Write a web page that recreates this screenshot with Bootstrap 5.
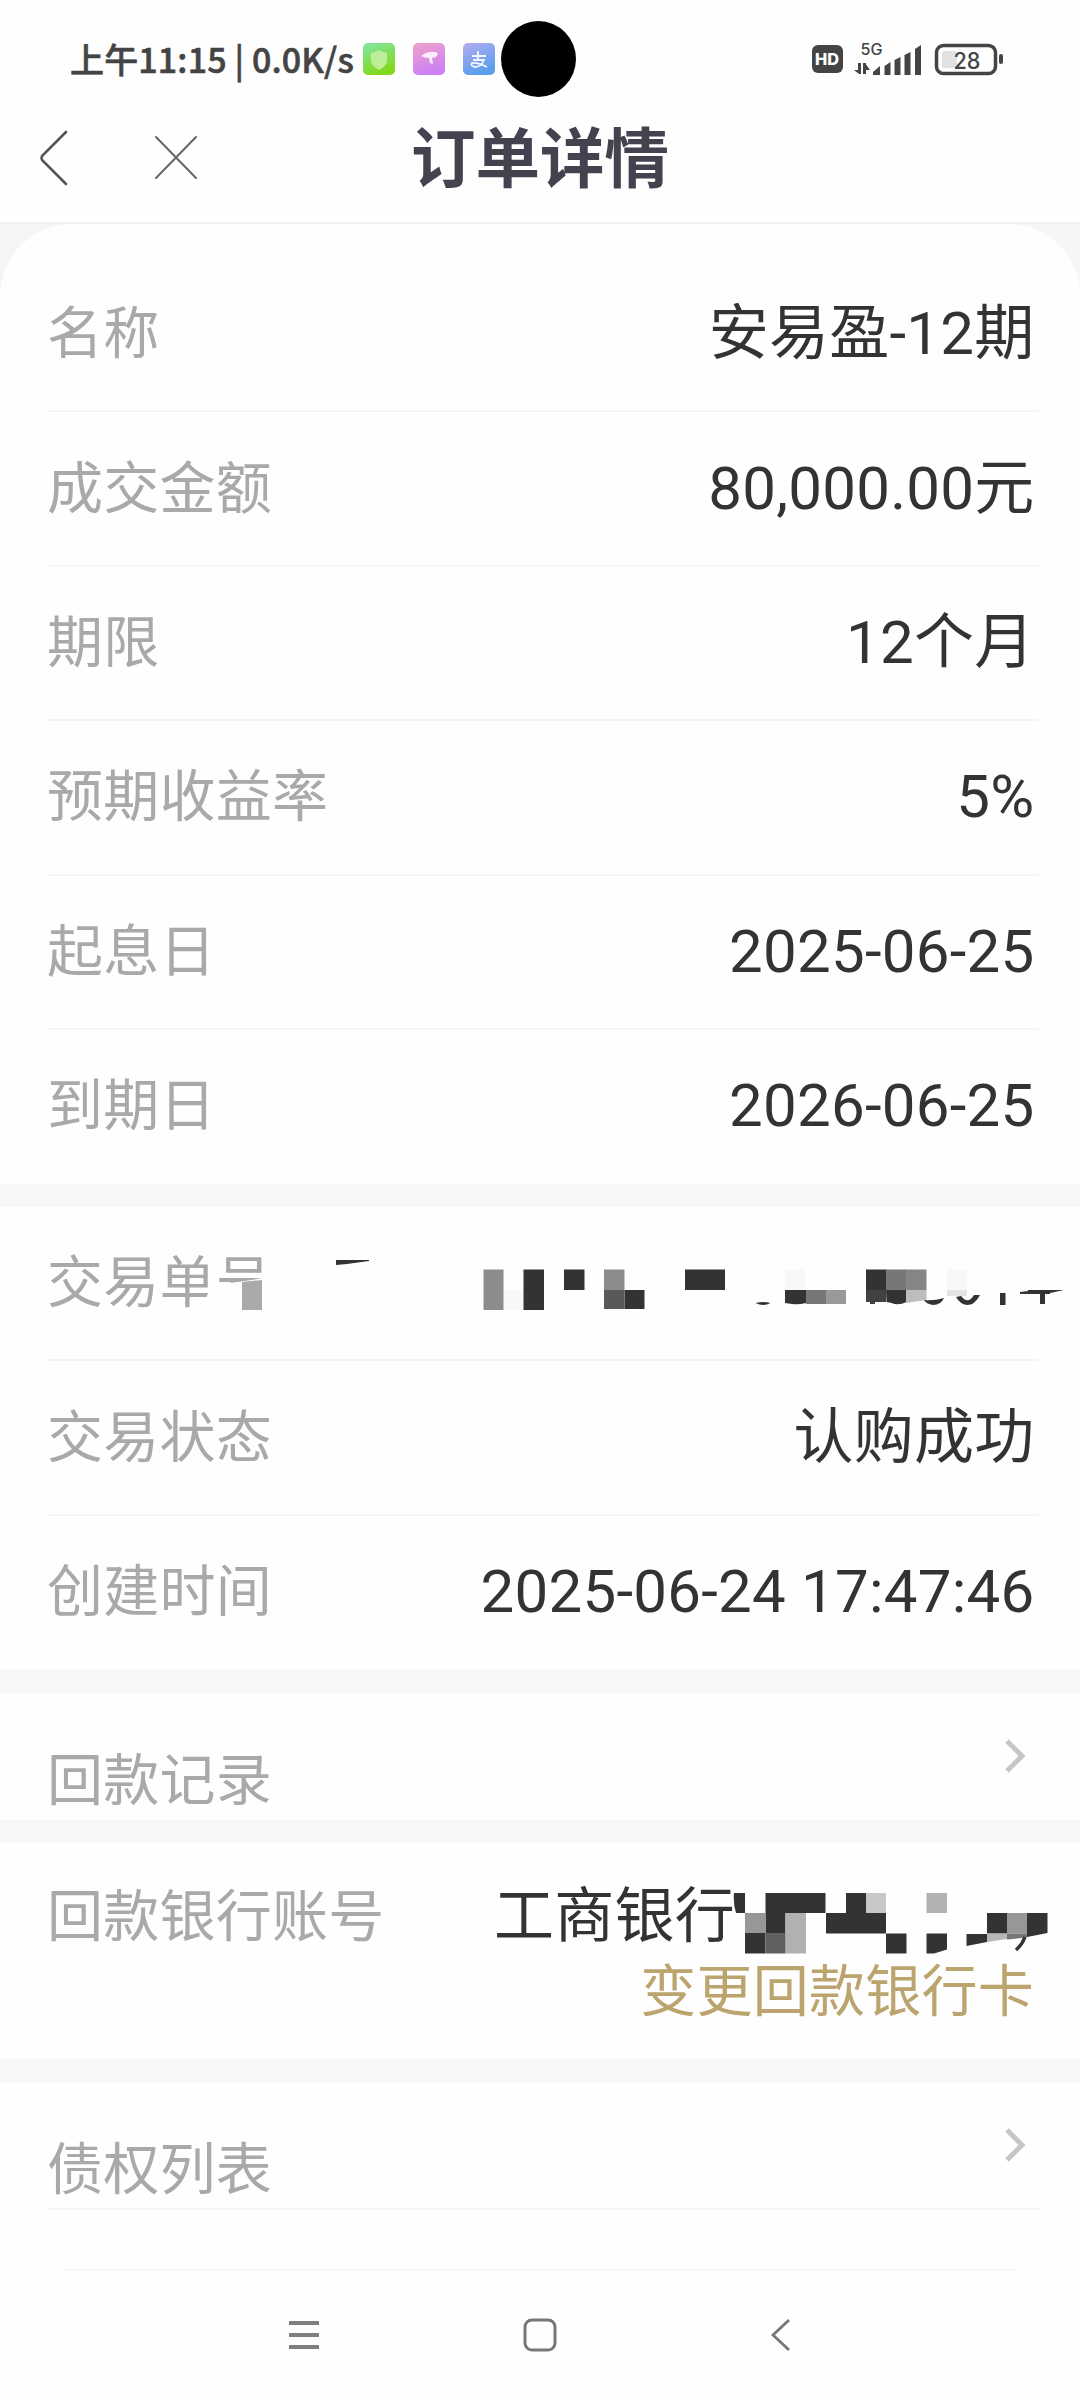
<!DOCTYPE html>
<html lang="zh-CN">
<head>
<meta charset="utf-8">
<meta name="viewport" content="width=device-width, initial-scale=1">
<title>订单详情</title>
<link href="https://cdn.jsdelivr.net/npm/bootstrap@5.3.0/dist/css/bootstrap.min.css" rel="stylesheet">
<style>
body{width:1080px;height:2400px;overflow:hidden;background:#fefefe;font-family:Roboto,"Noto Sans CJK SC",sans-serif;color:#333}
svg{display:block;overflow:visible;flex:none}
.statusbar{height:118px;color:#444;padding-left:70px;padding-right:76px}
.clock{font:500 34px/40px "Noto Sans CJK SC",sans-serif;letter-spacing:.15px;-webkit-text-stroke:.6px #444;width:293px;white-space:nowrap}
.camera{left:501px;top:21px}
.titlebar{height:104px;padding:0 40px 25px}
.page-title{font:700 64.5px/80px "Noto Sans CJK SC",sans-serif;color:#45424f;padding-bottom:8px}
.nav-side{width:160px}
.sheet{background:linear-gradient(135deg,#f5f5f5,#f8f8f8);border-top:2px solid #f2f2f2}
.sheet-top{padding-top:34px;border-radius:72px 72px 0 0}
.section-block{padding-left:47px;padding-right:41px;background:#fefefe}
.info-row{height:154.4px;border-bottom:2px solid #f5f5f5;padding-right:4.5px}
.info-row:last-of-type{border-bottom-color:transparent}
.info-label{font-size:56px;line-height:80px;letter-spacing:.25px;color:#a9a9a9;white-space:nowrap}
.info-value{font-size:60px;line-height:80px;letter-spacing:.25px;white-space:nowrap}
.gap-band{height:22.6px;background:#f7f7f7}
.row-link{height:127px;padding-top:23px}
.row-link .info-label{padding-top:25.5px}
.row-link svg{margin:23px 13px 0 0}
.bank{height:217px;padding-top:35px;padding-right:46px}
.bank-name{margin-right:299px}
.change-link{display:block;font-size:56px;line-height:80px;letter-spacing:.25px;color:#bba46d;margin-top:-5px}
.redact{left:0;top:0;width:1080px;height:1px;pointer-events:none}
.bonds{height:128.5px;border-bottom:2px solid #f3f3f3;margin-left:47px;margin-right:41px}
.end-line{height:61px;margin:0 65px;border-bottom:2px solid #f6f6f6}
.sysnav{height:128px;padding:0 289px}
.home-key{margin-right:10px}
</style>
<script src="https://cdn.jsdelivr.net/npm/bootstrap@5.3.0/dist/js/bootstrap.bundle.min.js"></script>
</head>
<body>
<header>
  <div class="statusbar d-flex align-items-center position-relative">
    <div class="clock">上午11:15 | 0.0K/s</div>
    <svg width="132" height="32" viewBox="0 0 132 32">
      <defs>
        <linearGradient id="g1" x2=".4" y2="1"><stop stop-color="#82e6a8"/><stop offset="1" stop-color="#82d91c"/></linearGradient>
        <linearGradient id="g2" x2=".3" y2="1"><stop stop-color="#efa3ca"/><stop offset="1" stop-color="#cd80f3"/></linearGradient>
        <linearGradient id="g3" x2=".4" y2="1"><stop stop-color="#b5acf2"/><stop offset="1" stop-color="#5b9eea"/></linearGradient>
      </defs>
      <rect width="32" height="32" rx="5" fill="url(#g1)"/>
      <path d="M16 7q4 3 8 3v8q-1 6-8 9q-7-3-8-9v-8q4 0 8-3z" fill="#c5f0a0" opacity=".9"/>
      <rect x="50" width="32" height="32" rx="5" fill="url(#g2)"/>
      <path d="M58 13q5-4 10-4 5-1 7 2l-2 3-4 1 1 6-3-1-1-5q-5 0-8-2z" fill="#fdeafa"/>
      <rect x="100" width="32" height="32" rx="5" fill="url(#g3)"/>
      <path d="M109 13h14M115 8v9M110 17h11q-3 7-9 7-5-1-3-4 5-1 15 4" fill="none" stroke="#f3f5ff" stroke-width="1.800"/>
    </svg>
    <svg class="camera position-absolute" width="75" height="76" viewBox="0 0 75 76"><ellipse cx="37.5" cy="38" rx="37.5" ry="38"/></svg>
    <svg class="ms-auto" width="192" height="32" viewBox="812 43 192 32" fill="#444">
      <rect x="812" y="45" width="31" height="28" rx="6"/>
      <text x="815" y="65" font-family="Inter" font-weight="800" font-size="16" textLength="24" lengthAdjust="spacingAndGlyphs" fill="#fff">HD</text>
      <text x="860.5" y="54.5" font-family="Inter" font-weight="500" font-size="15.5" textLength="22" lengthAdjust="spacingAndGlyphs">5G</text>
      <path d="M854 70h4v-7h3v11h-2zM863 63h3v11h-3zM863 63h2l5 7h-4z"/>
      <path d="M873 75v-3l7-6v9zM884.500 75v-9l6-4v13zM894.500 75v-15l6-3v18zM904.500 75v-20l6-3v23zM915 75v-26l6-4v30z"/>
      <rect x="936.500" y="45.500" width="59" height="28" rx="7" fill="none" stroke="#444" stroke-width="3.500"/>
      <rect x="942" y="51" width="15" height="17" rx="2" fill="#e2e2e2"/>
      <rect x="999" y="54" width="4" height="10" rx="2"/>
      <text x="953.500" y="68.500" font-family="Inter" font-weight="500" font-size="22.500" textLength="27" lengthAdjust="spacingAndGlyphs">28</text>
    </svg>
  </div>
  <div class="titlebar d-flex align-items-center justify-content-between">
    <div class="nav-side d-flex align-items-center">
      <svg width="28" height="54" viewBox="0 0 28 54" fill="none" stroke="#555" stroke-width="2.600" stroke-linecap="round"><path d="M26 1L2 25q-1 2 0 4L26 53" /></svg>
      <svg class="ms-auto" width="45" height="43" viewBox="0 0 45 43" stroke="#666" stroke-width="2" stroke-linecap="round"><path d="M1 1l40 41M41 1L1 42"/></svg>
    </div>
    <h1 class="page-title m-0">订单详情</h1>
    <div class="nav-side"></div>
  </div>
</header>
<main>
  <div class="sheet">
    <section class="sheet-top section-block">
      <div class="info-row d-flex align-items-center justify-content-between"><span class="info-label">名称</span><span class="info-value">安易盈-12期</span></div>
      <div class="info-row d-flex align-items-center justify-content-between"><span class="info-label">成交金额</span><span class="info-value">80,000.00元</span></div>
      <div class="info-row d-flex align-items-center justify-content-between"><span class="info-label">期限</span><span class="info-value">12个月</span></div>
      <div class="info-row d-flex align-items-center justify-content-between"><span class="info-label">预期收益率</span><span class="info-value">5%</span></div>
      <div class="info-row d-flex align-items-center justify-content-between"><span class="info-label">起息日</span><span class="info-value">2025-06-25</span></div>
      <div class="info-row d-flex align-items-center justify-content-between"><span class="info-label">到期日</span><span class="info-value">2026-06-25</span></div>
    </section>
  </div>
  <div class="gap-band"></div>
  <section class="section-block position-relative">
    <div class="info-row d-flex align-items-center justify-content-between"><span class="info-label">交易单号</span></div>
    <div class="info-row d-flex align-items-center justify-content-between"><span class="info-label">交易状态</span><span class="info-value">认购成功</span></div>
    <div class="info-row d-flex align-items-center justify-content-between"><span class="info-label">创建时间</span><span class="info-value">2025-06-24 17:47:46</span></div>
    <svg class="redact position-absolute" viewBox="0 1206 1080 1" fill="#333">
      <path d="M262 1250h16v65h-74v-14l8-17q30-3 50-7z" fill="#fefefe"/>
      <path d="M242 1281l20-2v30h-20z" fill="#aaa"/>
      <path d="M336 1259h33v1l-22 3-11 1z"/>
      <path d="M483.500 1268.500h20v40.500h-20zM604 1268.500h20.500v20.500h-20.500z" fill="#8c8c8c"/>
      <path d="M504 1289h19v20h-19zM785 1268.500h20.500v20.500h-20.500zM947 1268.500h20v20.500h-20z" fill="#f8f8f8"/>
      <path d="M523.500 1268.500h20.500v40.500h-20.500zM564 1268.500h20.500v20.500h-20.500zM624.500 1289h20v19h-20zM685 1268.500h40v20.500h-40zM785 1289h21v13q-8 2-14 1l-7-1zM866 1268.500h20.500v20.500h-20.500zM886 1289h20.500v12q-8 4-15 1l-5-1z"/>
      <path d="M604 1289h20.500v19h-20.500z" fill="#595959"/>
      <path d="M755.500 1302q8-2 15 0q-7 4-15 0z"/>
      <path d="M806 1289h20v14h-20zM886 1268.500h20.500v20.500h-20.500z" fill="#777"/>
      <path d="M826 1289h20v14h-20z" fill="#999"/>
      <path d="M906 1268.500h20.500v20.500h-20.500z" fill="#858585"/>
      <path d="M866 1289h20v12h-11v2h-5v-2h-4z" fill="#414141"/>
      <path d="M906 1289h20.500v10l-20.500 3z" fill="#bdbdbd"/>
      <path d="M947 1289h20v6h-20z" fill="#e4e4e4"/>
      <path d="M924 1299q10 1 20-2q-3 7-11 7q-7-1-9-5zM956 1296l5-1q7 9 13-1l6 0q-5 10-13 10q-7-1-11-8zM1000 1292h5.500v12h-5.500zM1020 1291l8-1v-1l36 0-14 3v1h-5v10h-5v-10h-20z"/>
    </svg>
  </section>
  <div class="gap-band"></div>
  <section class="section-block row-link d-flex justify-content-between align-items-start">
    <span class="info-label">回款记录</span>
    <svg width="21" height="34" viewBox="0 0 21 34" fill="none" stroke="#c6c6c6" stroke-width="5"><path d="M2 2l15 15L2 32"/></svg>
  </section>
  <div class="gap-band"></div>
  <section class="section-block bank position-relative">
    <div class="d-flex justify-content-between"><span class="info-label">回款银行账号</span><span class="info-value bank-name">工商银行</span></div>
    <div class="text-end"><a class="change-link text-decoration-none" href="#">变更回款银行卡</a></div>
    <svg class="redact position-absolute" viewBox="0 1842 1080 1" fill="#333">
      <path d="M734 1880h12v66h-12z" fill="#fefefe"/>
      <path d="M734 1893h11v20h-9q-3-10-2-20zM765.500 1893h60v20h-60zM846 1893h20v20h-20zM765.500 1913h20v20h-20zM826 1913h60v20.500h-60zM745 1933h20.500v20.500h-20.500zM886 1933.500h20.500v20h-20.500zM926.500 1933.500h20.500v16l-13 4h-7.500zM987 1913h20v20.500h-20zM1027 1913h20.500v20l-20.500 4zM966.500 1934h20.500v8l-20.500 4z"/>
      <path d="M745 1913h20.500v20h-20.500zM1007 1913h20v20.500h-20z" fill="#979797"/>
      <path d="M785.500 1913h20.500v40.500h-20.500zM926.500 1893h20.500v20h-20.500z" fill="#b1b1b1"/>
      <path d="M866 1893h20v20h-20z" fill="#c8c8c8"/>
      <path d="M765.500 1933h20v20.500h-20z" fill="#606060"/>
      <path d="M987 1934h20v5l-20 3z" fill="#b7b7b7"/>
      <path d="M1007 1933.500h20v4l-20 2z" fill="#777"/>
      <path d="M1025 1937q-3 8-9 13" fill="none" stroke="#333" stroke-width="3.500"/>
    </svg>
  </section>
  <div class="gap-band"></div>
  <section class="row-link bonds d-flex justify-content-between align-items-start">
    <span class="info-label">债权列表</span>
    <svg width="21" height="34" viewBox="0 0 21 34" fill="none" stroke="#c6c6c6" stroke-width="5"><path d="M2 2l15 15L2 32"/></svg>
  </section>
  <div class="end-line"></div>
</main>
<nav class="sysnav d-flex align-items-center justify-content-between">
  <svg width="30" height="28" viewBox="0 0 30 28" fill="#808080"><path d="M0 0h30v4H0zM0 12h30v4H0zM0 24h30v4H0z"/></svg>
  <svg class="home-key" width="34" height="34" viewBox="0 0 34 34" fill="none" stroke="#777" stroke-width="3"><rect x="2" y="2" width="30" height="30" rx="7"/></svg>
  <svg width="20" height="32" viewBox="0 0 20 32" fill="none" stroke="#777" stroke-width="2.800"><path d="M18 1L2 16l16 15"/></svg>
</nav>
</body>
</html>
